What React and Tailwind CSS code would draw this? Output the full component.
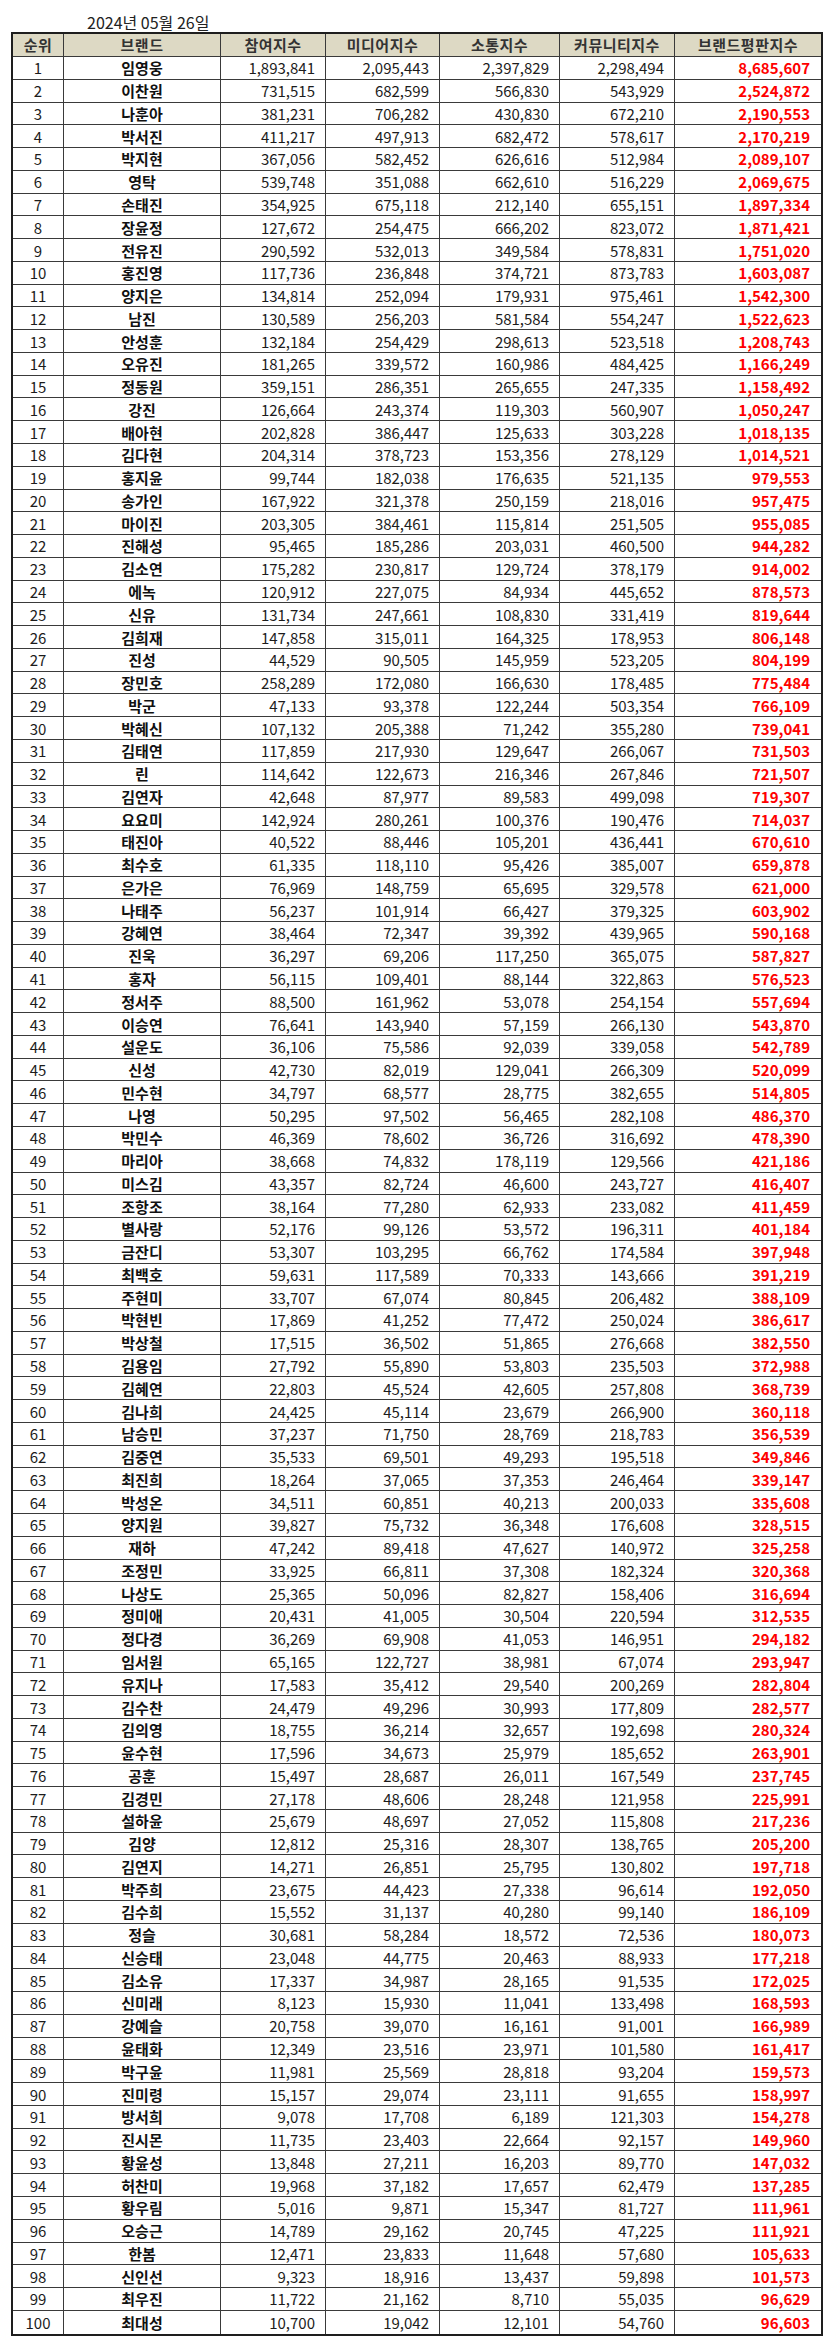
const RAW = `임영웅 1,893,841 2,095,443 2,397,829 2,298,494 8,685,607
이찬원 731,515 682,599 566,830 543,929 2,524,872
나훈아 381,231 706,282 430,830 672,210 2,190,553
박서진 411,217 497,913 682,472 578,617 2,170,219
박지현 367,056 582,452 626,616 512,984 2,089,107
영탁 539,748 351,088 662,610 516,229 2,069,675
손태진 354,925 675,118 212,140 655,151 1,897,334
장윤정 127,672 254,475 666,202 823,072 1,871,421
전유진 290,592 532,013 349,584 578,831 1,751,020
홍진영 117,736 236,848 374,721 873,783 1,603,087
양지은 134,814 252,094 179,931 975,461 1,542,300
남진 130,589 256,203 581,584 554,247 1,522,623
안성훈 132,184 254,429 298,613 523,518 1,208,743
오유진 181,265 339,572 160,986 484,425 1,166,249
정동원 359,151 286,351 265,655 247,335 1,158,492
강진 126,664 243,374 119,303 560,907 1,050,247
배아현 202,828 386,447 125,633 303,228 1,018,135
김다현 204,314 378,723 153,356 278,129 1,014,521
홍지윤 99,744 182,038 176,635 521,135 979,553
송가인 167,922 321,378 250,159 218,016 957,475
마이진 203,305 384,461 115,814 251,505 955,085
진해성 95,465 185,286 203,031 460,500 944,282
김소연 175,282 230,817 129,724 378,179 914,002
에녹 120,912 227,075 84,934 445,652 878,573
신유 131,734 247,661 108,830 331,419 819,644
김희재 147,858 315,011 164,325 178,953 806,148
진성 44,529 90,505 145,959 523,205 804,199
장민호 258,289 172,080 166,630 178,485 775,484
박군 47,133 93,378 122,244 503,354 766,109
박혜신 107,132 205,388 71,242 355,280 739,041
김태연 117,859 217,930 129,647 266,067 731,503
린 114,642 122,673 216,346 267,846 721,507
김연자 42,648 87,977 89,583 499,098 719,307
요요미 142,924 280,261 100,376 190,476 714,037
태진아 40,522 88,446 105,201 436,441 670,610
최수호 61,335 118,110 95,426 385,007 659,878
은가은 76,969 148,759 65,695 329,578 621,000
나태주 56,237 101,914 66,427 379,325 603,902
강혜연 38,464 72,347 39,392 439,965 590,168
진욱 36,297 69,206 117,250 365,075 587,827
홍자 56,115 109,401 88,144 322,863 576,523
정서주 88,500 161,962 53,078 254,154 557,694
이승연 76,641 143,940 57,159 266,130 543,870
설운도 36,106 75,586 92,039 339,058 542,789
신성 42,730 82,019 129,041 266,309 520,099
민수현 34,797 68,577 28,775 382,655 514,805
나영 50,295 97,502 56,465 282,108 486,370
박민수 46,369 78,602 36,726 316,692 478,390
마리아 38,668 74,832 178,119 129,566 421,186
미스김 43,357 82,724 46,600 243,727 416,407
조항조 38,164 77,280 62,933 233,082 411,459
별사랑 52,176 99,126 53,572 196,311 401,184
금잔디 53,307 103,295 66,762 174,584 397,948
최백호 59,631 117,589 70,333 143,666 391,219
주현미 33,707 67,074 80,845 206,482 388,109
박현빈 17,869 41,252 77,472 250,024 386,617
박상철 17,515 36,502 51,865 276,668 382,550
김용임 27,792 55,890 53,803 235,503 372,988
김혜연 22,803 45,524 42,605 257,808 368,739
김나희 24,425 45,114 23,679 266,900 360,118
남승민 37,237 71,750 28,769 218,783 356,539
김중연 35,533 69,501 49,293 195,518 349,846
최진희 18,264 37,065 37,353 246,464 339,147
박성온 34,511 60,851 40,213 200,033 335,608
양지원 39,827 75,732 36,348 176,608 328,515
재하 47,242 89,418 47,627 140,972 325,258
조정민 33,925 66,811 37,308 182,324 320,368
나상도 25,365 50,096 82,827 158,406 316,694
정미애 20,431 41,005 30,504 220,594 312,535
정다경 36,269 69,908 41,053 146,951 294,182
임서원 65,165 122,727 38,981 67,074 293,947
유지나 17,583 35,412 29,540 200,269 282,804
김수찬 24,479 49,296 30,993 177,809 282,577
김의영 18,755 36,214 32,657 192,698 280,324
윤수현 17,596 34,673 25,979 185,652 263,901
공훈 15,497 28,687 26,011 167,549 237,745
김경민 27,178 48,606 28,248 121,958 225,991
설하윤 25,679 48,697 27,052 115,808 217,236
김양 12,812 25,316 28,307 138,765 205,200
김연지 14,271 26,851 25,795 130,802 197,718
박주희 23,675 44,423 27,338 96,614 192,050
김수희 15,552 31,137 40,280 99,140 186,109
정슬 30,681 58,284 18,572 72,536 180,073
신승태 23,048 44,775 20,463 88,933 177,218
김소유 17,337 34,987 28,165 91,535 172,025
신미래 8,123 15,930 11,041 133,498 168,593
강예슬 20,758 39,070 16,161 91,001 166,989
윤태화 12,349 23,516 23,971 101,580 161,417
박구윤 11,981 25,569 28,818 93,204 159,573
진미령 15,157 29,074 23,111 91,655 158,997
방서희 9,078 17,708 6,189 121,303 154,278
진시몬 11,735 23,403 22,664 92,157 149,960
황윤성 13,848 27,211 16,203 89,770 147,032
허찬미 19,968 37,182 17,657 62,479 137,285
황우림 5,016 9,871 15,347 81,727 111,961
오승근 14,789 29,162 20,745 47,225 111,921
한봄 12,471 23,833 11,648 57,680 105,633
신인선 9,323 18,916 13,437 59,898 101,573
최우진 11,722 21,162 8,710 55,035 96,629
최대성 10,700 19,042 12,101 54,760 96,603`;

const ROWS = RAW.split('\n').map((line, i) => {
  const [name, a, b, c, d, total] = line.trim().split(' ');
  return { rank: i + 1, name, a, b, c, d, total };
});

const HEADERS = ['순위', '브랜드', '참여지수', '미디어지수', '소통지수', '커뮤니티지수', '브랜드평판지수'];

// column widths include the 1px right border
const COLS = ['w-[51px]', 'w-[157px]', 'w-[105px]', 'w-[114px]', 'w-[120px]', 'w-[115px]', 'flex-1'];

const App = () => {
  return (
    <div
      className="w-[830px] min-h-[2345px] bg-white text-[#1c1c1c]"
      style={{ fontFamily: '"Noto Sans CJK KR", "Noto Sans", sans-serif' }}
    >
      <div className="pt-[12px] pl-[87px] h-[32px] text-[16px] leading-[20px] text-[#222]">2024년 05월 26일</div>

      <div className="ml-[11px] w-[812px] border-2 border-[#1e1e1e]">
        <div className="flex h-[23px] bg-[#ddd9c4] border-b border-[#3a3a3a]">
          {HEADERS.map((h, i) => (
            <div
              key={h}
              className={`${COLS[i]} ${i < 6 ? 'border-r border-[#3a3a3a]' : ''} flex items-center justify-center text-[15px] font-semibold text-[#333] tracking-[0.5px]`}
            >
              {h}
            </div>
          ))}
        </div>

        {ROWS.map((r) => (
          <div
            key={r.rank}
            className={`flex h-[22.78px] ${r.rank < 100 ? 'border-b border-[#3a3a3a]' : ''} text-[15px] leading-none`}
          >
            <div className="w-[51px] border-r border-[#3a3a3a] flex items-center justify-center">{r.rank}</div>
            <div className="w-[157px] border-r border-[#3a3a3a] flex items-center justify-center font-bold text-[#111]">{r.name}</div>
            <div className="w-[105px] border-r border-[#3a3a3a] flex items-center justify-end pr-[10px]">{r.a}</div>
            <div className="w-[114px] border-r border-[#3a3a3a] flex items-center justify-end pr-[10px]">{r.b}</div>
            <div className="w-[120px] border-r border-[#3a3a3a] flex items-center justify-end pr-[10px]">{r.c}</div>
            <div className="w-[115px] border-r border-[#3a3a3a] flex items-center justify-end pr-[10px]">{r.d}</div>
            <div className="flex-1 flex items-center justify-end pr-[11px] font-bold text-[#ff0000]">{r.total}</div>
          </div>
        ))}
      </div>
    </div>
  );
};

export default App;
